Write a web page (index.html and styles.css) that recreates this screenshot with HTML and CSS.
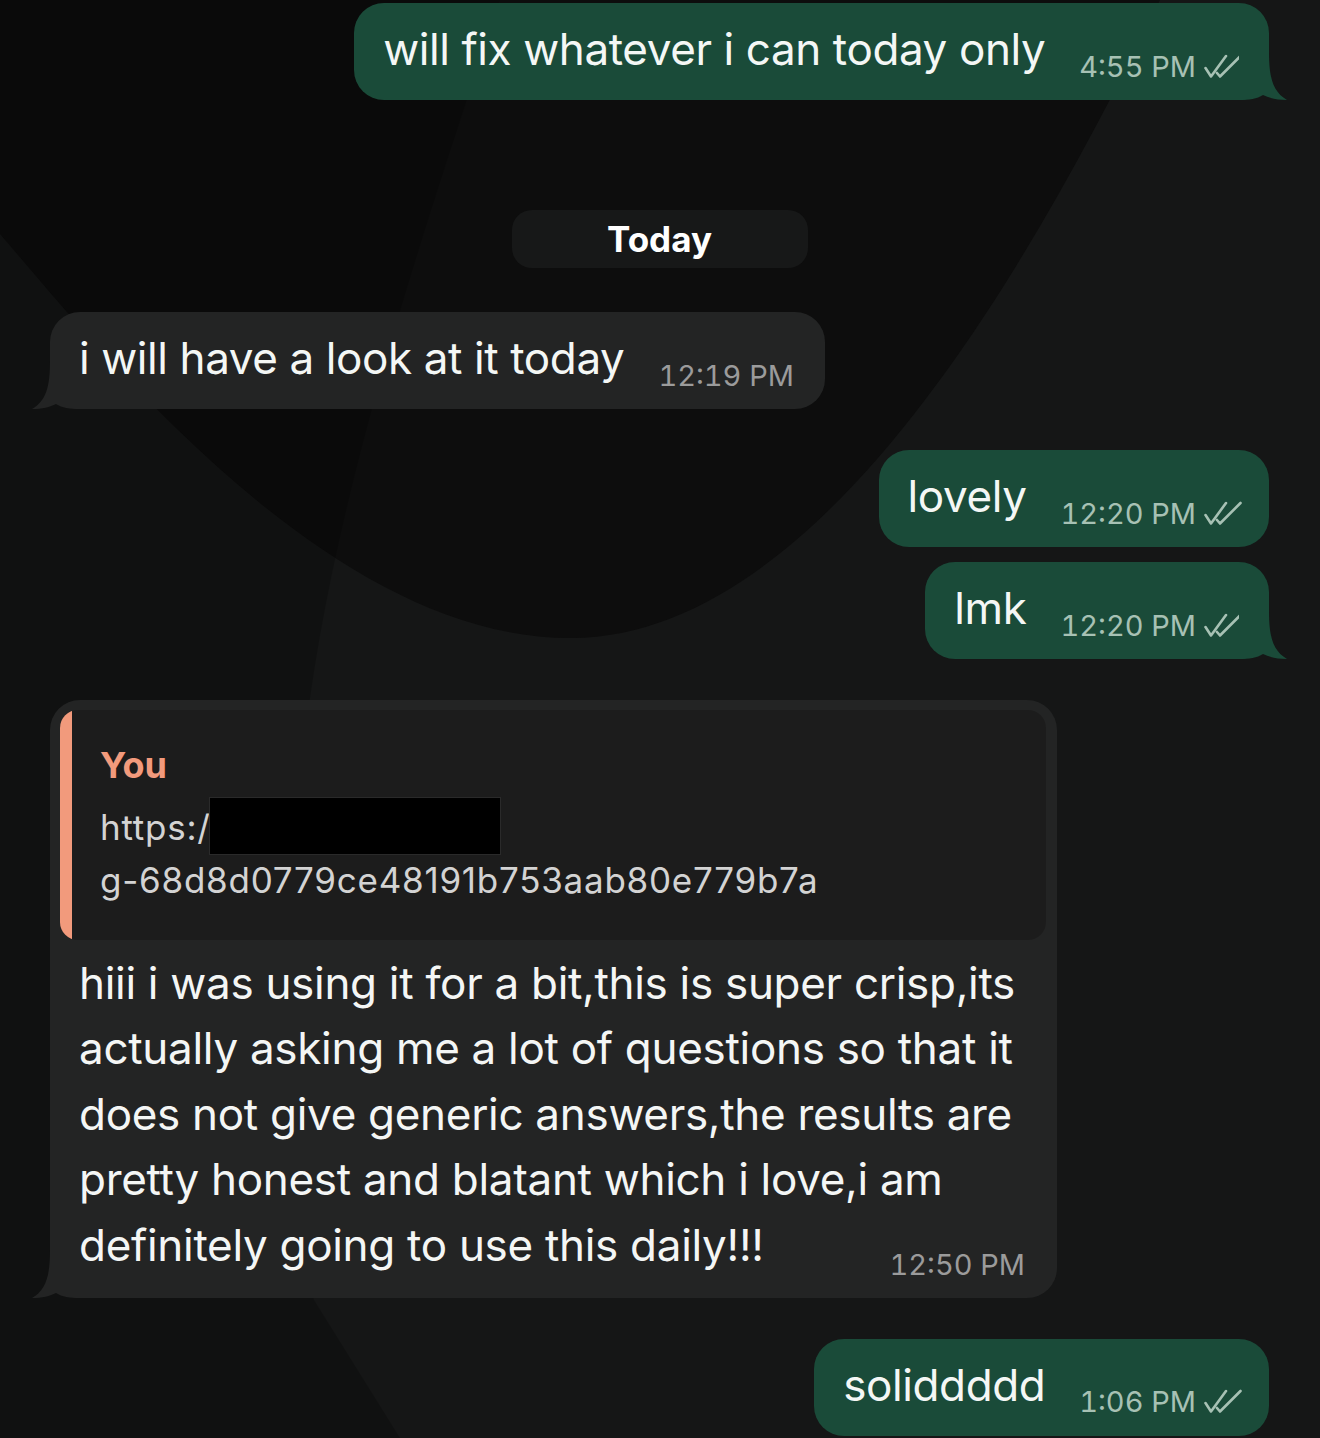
FILE: index.html
```html
<!DOCTYPE html>
<html lang="en">
<head>
<meta charset="utf-8">
<title>Chat</title>
<link rel="stylesheet" href="styles.css">
</head>
<body>
<div class="wallpaper">
  <svg width="1320" height="1438" viewBox="0 0 1320 1438">
    <rect width="1320" height="1438" fill="#151616"/>
    <path d="M0,0 L0,234 C100,350 330,640 572,638 C800,636 1000,330 1160,0 Z" fill="#0d0d0d"/>
    <path d="M0,0 L500,0 C390,330 295,620 295,900 C295,1100 300,1250 314,1300 L400,1438 L0,1438 Z" fill="#000" opacity="0.2"/>
  </svg>
</div>

<main class="chat">
  <div class="bubble out first">
    <span class="text">will fix whatever i can today only</span>
    <span class="meta"><span class="time">4:55 PM</span><svg class="ticks" viewBox="0 0 38 24"><path d="M1.5,14 L7,22.5 L22,2 M13,19 L16,22.5 L36.5,2"/></svg></span>
    <svg class="tail tail-out" viewBox="0 0 48 48"><path d="M0,0 H30 C30,26 34,40 48,48 C38,48 30,46 24,43 C18,47 10,48 0,48 Z"/></svg>
  </div>

  <div class="day">Today</div>

  <div class="bubble in look">
    <span class="text">i will have a look at it today</span>
    <span class="meta"><span class="time">12:19 PM</span></span>
    <svg class="tail tail-in" viewBox="0 0 48 48"><path d="M0,0 H30 C30,26 34,40 48,48 C38,48 30,46 24,43 C18,47 10,48 0,48 Z"/></svg>
  </div>

  <div class="bubble out lovely">
    <span class="text">lovely</span>
    <span class="meta"><span class="time">12:20 PM</span><svg class="ticks" viewBox="0 0 38 24"><path d="M1.5,14 L7,22.5 L22,2 M13,19 L16,22.5 L36.5,2"/></svg></span>
  </div>

  <div class="bubble out lmk">
    <span class="text">lmk</span>
    <span class="meta"><span class="time">12:20 PM</span><svg class="ticks" viewBox="0 0 38 24"><path d="M1.5,14 L7,22.5 L22,2 M13,19 L16,22.5 L36.5,2"/></svg></span>
    <svg class="tail tail-out" viewBox="0 0 48 48"><path d="M0,0 H30 C30,26 34,40 48,48 C38,48 30,46 24,43 C18,47 10,48 0,48 Z"/></svg>
  </div>

  <div class="bubble in reply">
    <div class="quote">
      <div class="q-name">You</div>
      <div class="q-url">https:/<span class="redact"></span><br>g-68d8d0779ce48191b753aab80e779b7a</div>
    </div>
    <div class="msg-body">
      <div class="body-text">hiii i was using it for a bit,this is super crisp,its<br>actually asking me a lot of questions so that it<br>does not give generic answers,the results are<br>pretty honest and blatant which i love,i am<br>definitely going to use this daily!!!</div>
      <span class="meta"><span class="time">12:50 PM</span></span>
    </div>
    <svg class="tail tail-in" viewBox="0 0 48 48"><path d="M0,0 H30 C30,26 34,40 48,48 C38,48 30,46 24,43 C18,47 10,48 0,48 Z"/></svg>
  </div>

  <div class="bubble out solid">
    <span class="text">soliddddd</span>
    <span class="meta"><span class="time">1:06 PM</span><svg class="ticks" viewBox="0 0 38 24"><path d="M1.5,14 L7,22.5 L22,2 M13,19 L16,22.5 L36.5,2"/></svg></span>
  </div>
</main>
</body>
</html>
```

FILE: styles.css
```css
html, body {
  margin: 0;
  padding: 0;
}

body {
  width: 1320px;
  height: 1438px;
  overflow: hidden;
  position: relative;
  background: #151616;
  font-family: Inter, "Noto Sans", "Liberation Sans", sans-serif;
  color: #f4f6f5;
}

.wallpaper {
  position: absolute;
  inset: 0;
  z-index: 0;
}

.wallpaper svg {
  display: block;
}

.chat {
  position: relative;
  z-index: 1;
  display: flex;
  flex-direction: column;
  padding: 3px 51px 0 50px;
}

.bubble {
  position: relative;
  display: flex;
  align-items: flex-end;
  border-radius: 30px;
  padding: 20px 27px 25px 29px;
}

.bubble.out {
  align-self: flex-end;
  background: #1a4b39;
}

.bubble.in {
  align-self: flex-start;
  background: #232424;
  padding-right: 31px;
}

.text {
  font-size: 44px;
  line-height: 52px;
  letter-spacing: -0.4px;
  white-space: nowrap;
  color: #f4f7f5;
}

.meta {
  display: flex;
  align-items: flex-end;
  gap: 8px;
  margin-left: 34px;
  margin-bottom: -8.5px;
}

.time {
  font-size: 29px;
  line-height: 34px;
  font-variant-numeric: tabular-nums;
  white-space: nowrap;
}

.out .time {
  color: #a7c1b4;
}

.in .time {
  color: #9b9b9b;
}

.ticks {
  width: 38px;
  height: 24px;
  margin-bottom: 6px;
  fill: none;
  stroke: #a7c1b4;
  stroke-width: 2.6;
  stroke-linecap: round;
  stroke-linejoin: round;
}

.tail {
  position: absolute;
  bottom: 0;
  width: 48px;
  height: 48px;
}

.tail-out {
  right: -18px;
  fill: #1a4b39;
}

.tail-in {
  left: -18px;
  fill: #232424;
  transform: scaleX(-1);
}

.day {
  align-self: center;
  margin-top: 110px;
  width: 296px;
  height: 58px;
  border-radius: 20px;
  background: #171818;
  display: flex;
  align-items: center;
  justify-content: center;
  font-size: 35px;
  font-weight: 700;
  color: #ffffff;
}

.look {
  margin-top: 44px;
}

.lovely {
  margin-top: 41px;
}

.lmk {
  margin-top: 15px;
}

.bubble.reply {
  margin-top: 41px;
  display: block;
  width: 1007px;
  box-sizing: border-box;
  padding: 10px 11px 19.5px 10px;
}

.quote {
  background: linear-gradient(90deg, #f29a7c 0 12px, #1c1c1c 12px);
  border-radius: 18px;
  padding: 33px 20px 33px 40px;
}

.q-name {
  font-size: 36px;
  line-height: 44px;
  font-weight: 700;
  color: #f29a7c;
}

.q-url {
  margin-top: 13.5px;
  font-size: 35px;
  line-height: 53px;
  letter-spacing: 0.75px;
  color: #d3d3d3;
}

.redact {
  display: inline-block;
  width: 290px;
  height: 56px;
  background: #000;
  border: 1px solid #2a2a2a;
  vertical-align: -13px;
  margin: -4px 0 -2px -2px;
}

.msg-body {
  display: grid;
  margin-top: 11px;
  padding: 0 21px 0 19px;
}

.body-text {
  grid-area: 1 / 1;
  font-size: 44px;
  line-height: 65.5px;
  letter-spacing: -0.3px;
  color: #f4f6f5;
  white-space: nowrap;
}

.msg-body .meta {
  grid-area: 1 / 1;
  justify-self: end;
  align-self: end;
  margin-bottom: -3.7px;
}

.solid {
  margin-top: 41px;
}
```
